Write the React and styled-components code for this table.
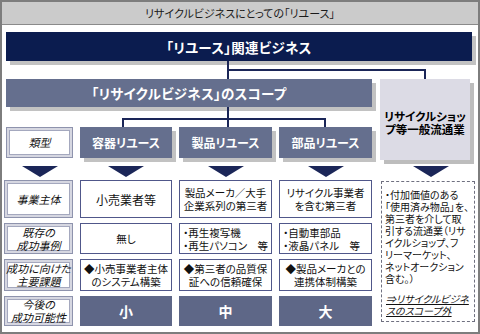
import React from "react";
import styled, { createGlobalStyle } from "styled-components";

const GlobalStyle = createGlobalStyle`
  html, body {
    margin: 0;
    padding: 0;
    background: #ffffff;
  }
  body {
    font-family: "Noto Sans CJK JP", "Noto Sans", sans-serif;
  }
`;

const COLS = "69px 92px 93px 93px 96px";
const NAVY = "#0b1c4f";
const SLATE = "#656f8e";
const LINE = "#1b2658";

const Frame = styled.div`
  width: 480px;
  height: 334px;
  box-sizing: border-box;
  border: 2px solid #7d7d7d;
  display: flex;
  flex-direction: column;
  font-family: "Noto Sans CJK JP", "Noto Sans", sans-serif;
  font-feature-settings: "palt";
  color: #111;
`;

const TitleBar = styled.div`
  height: 22px;
  flex-shrink: 0;
  background: #cbcbcb;
  border-bottom: 1px solid #8a8a8a;
  display: flex;
  align-items: center;
  justify-content: center;
  font-size: 11px;
  color: #1a1a1a;
`;

const Body = styled.div`
  padding: 7px 3px 6px 2px;
  display: flex;
  flex-direction: column;
`;

const Top = styled.div`
  display: grid;
  grid-template-columns: ${COLS};
  grid-template-rows: 29px 18px 28px 20px 31px 22px;
  column-gap: 7px;
`;

const Table = styled.div`
  display: grid;
  grid-template-columns: ${COLS};
  grid-template-rows: 38px 31px 32px 30px;
  column-gap: 7px;
  row-gap: 5px;
`;

const Bar = styled.div`
  grid-column: ${(p) => p.$span};
  grid-row: ${(p) => p.$row};
  margin: 0 ${(p) => p.$mr || 0}px 0 2px;
  background: ${(p) => p.$bg};
  color: #fff;
  font-size: 13.5px;
  font-weight: 700;
  display: flex;
  align-items: center;
  justify-content: center;
  box-shadow: 4px 4px 0 #c2c2c2;
  letter-spacing: 0.3px;
`;

const Connector = styled.svg`
  grid-column: ${(p) => p.$span};
  grid-row: ${(p) => p.$row};
  display: block;
`;

const ShopBox = styled.div`
  grid-column: 5;
  grid-row: 3 / 6;
  margin: 0 5px -2px 1px;
  background: #dcdbe5;
  box-shadow: 4px 4px 0 #bdbdbd;
  display: flex;
  flex-direction: column;
  align-items: center;
  justify-content: center;
  text-align: center;
  font-size: 11.5px;
  font-weight: 700;
  line-height: 13px;
  color: #000;
  padding-top: 6px;
`;

const LabelBox = styled.div`
  grid-column: 1;
  grid-row: ${(p) => p.$row};
  background: #fff;
  border: 1px solid #8e93ad;
  box-shadow: inset 0 0 0 2px #d6d7e1, inset 0 0 0 3px #a4a8be;
  display: flex;
  flex-direction: column;
  align-items: center;
  justify-content: center;
  text-align: center;
  font-size: 11px;
  font-style: italic;
  line-height: 13px;
  color: #111;
  margin: ${(p) => (p.$inset ? "0 0 0 2px" : "0")};
`;

const ColHead = styled.div`
  grid-column: ${(p) => p.$col};
  grid-row: 5;
  background: ${SLATE};
  color: #fff;
  font-size: 12px;
  font-weight: 700;
  display: flex;
  align-items: center;
  justify-content: center;
  box-shadow: 4px 4px 0 #c2c2c2;
`;

const Arrow = styled.div`
  grid-column: ${(p) => p.$col};
  grid-row: 6;
  justify-self: center;
  align-self: start;
  width: 0;
  height: 0;
  margin: 8px 0 0 ${(p) => p.$shift || 0}px;
  border-left: 18px solid transparent;
  border-right: 18px solid transparent;
  border-top: 11px solid ${LINE};
`;

const Cell = styled.div`
  grid-column: ${(p) => p.$col};
  grid-row: ${(p) => p.$row};
  background: #fff;
  border: 1px solid #50578a;
  display: flex;
  flex-direction: column;
  justify-content: center;
  align-items: ${(p) => (p.$left ? "flex-start" : "center")};
  text-align: ${(p) => (p.$left ? "left" : "center")};
  padding-left: ${(p) => (p.$left ? "3px" : "0")};
  font-size: ${(p) => p.$size || 10.5}px;
  line-height: 13px;
  white-space: nowrap;
  color: #111;
`;

const Rating = styled.div`
  grid-column: ${(p) => p.$col};
  grid-row: 4;
  background: #5e6787;
  color: #fff;
  font-size: 14px;
  font-weight: 700;
  display: flex;
  align-items: center;
  justify-content: center;
`;

const NoteBox = styled.div`
  grid-column: 5;
  grid-row: 1 / 5;
  margin: 1px 0 4px 2px;
  border: 1px dashed #6f7080;
  padding: 7px 0 0 3px;
  font-size: 10px;
  line-height: 12px;
  white-space: nowrap;
  color: #111;
`;

const NoteLine = styled.div``;

const Excluded = styled.div`
  margin-top: 8px;
  margin-left: 1px;
  font-style: italic;
  text-decoration: underline;
  font-size: 10px;
  line-height: 12px;
`;

const labels = [
  ["事業主体"],
  ["既存の", "成功事例"],
  ["成功に向けた", "主要課題"],
  ["今後の", "成功可能性"],
];

const rows = [
  [
    { text: ["小売業者等"], size: 12 },
    { text: ["製品メーカ／大手", "企業系列の第三者"] },
    { text: ["リサイクル事業者", "を含む第三者"] },
  ],
  [
    { text: ["無し"] },
    { text: ["・再生複写機", "・再生パソコン　等"], left: true },
    { text: ["・自動車部品", "・液晶パネル　等"], left: true },
  ],
  [
    { text: ["◆小売事業者主体", "のシステム構築"] },
    { text: ["◆第三者の品質保", "証への信頼確保"] },
    { text: ["◆製品メーカとの", "連携体制構築"] },
  ],
];

const notes = [
  "・付加価値のある",
  "「使用済み物品」を、",
  "第三者を介して取",
  "引する流通業（リサ",
  "イクルショップ、フ",
  "リーマーケット、",
  "ネットオークション",
  "含む。）",
];

const Lines = ({ items }) =>
  items.map((t, i) => <div key={i}>{t}</div>);

export default function App() {
  return (
    <>
      <GlobalStyle />
      <Frame>
        <TitleBar>リサイクルビジネスにとっての「リユース」</TitleBar>
        <Body>
          <Top>
            <Bar $span="1 / -1" $row={1} $mr={3} $bg={NAVY}>
              「リユース」関連ビジネス
            </Bar>
            <Connector $span="1 / -1" $row={2} width="471" height="18">
              <path
                d="M224 0 V18 M224 9 H421 V18"
                stroke={LINE}
                strokeWidth="2"
                fill="none"
              />
            </Connector>
            <Bar $span="1 / 5" $row={3} $bg={SLATE}>
              「リサイクルビジネス」のスコープ
            </Bar>
            <ShopBox>
              <Lines items={["リサイクルショッ", "プ等一般流通業"]} />
            </ShopBox>
            <Connector $span="1 / 5" $row={4} width="368" height="20">
              <path
                d="M224 0 V20 M119 20 V12 H321 V20"
                stroke={LINE}
                strokeWidth="2"
                fill="none"
              />
            </Connector>
            <LabelBox $row={5} $inset>類型</LabelBox>
            <ColHead $col={2}>容器リユース</ColHead>
            <ColHead $col={3}>製品リユース</ColHead>
            <ColHead $col={4}>部品リユース</ColHead>
            <Arrow $col={1} $shift={2} />
            <Arrow $col={2} />
            <Arrow $col={3} />
            <Arrow $col={4} />
            <Arrow $col={5} $shift={8} />
          </Top>
          <Table>
            {labels.map((l, i) => (
              <LabelBox key={i} $row={i + 1}>
                <Lines items={l} />
              </LabelBox>
            ))}
            {rows.map((r, ri) =>
              r.map((c, ci) => (
                <Cell
                  key={`${ri}-${ci}`}
                  $row={ri + 1}
                  $col={ci + 2}
                  $left={c.left}
                  $size={c.size}
                >
                  <Lines items={c.text} />
                </Cell>
              ))
            )}
            <Rating $col={2}>小</Rating>
            <Rating $col={3}>中</Rating>
            <Rating $col={4}>大</Rating>
            <NoteBox>
              {notes.map((n, i) => (
                <NoteLine key={i}>{n}</NoteLine>
              ))}
              <Excluded>
                ⇒リサイクルビジネ
                <br />
                スのスコープ外
              </Excluded>
            </NoteBox>
          </Table>
        </Body>
      </Frame>
    </>
  );
}
